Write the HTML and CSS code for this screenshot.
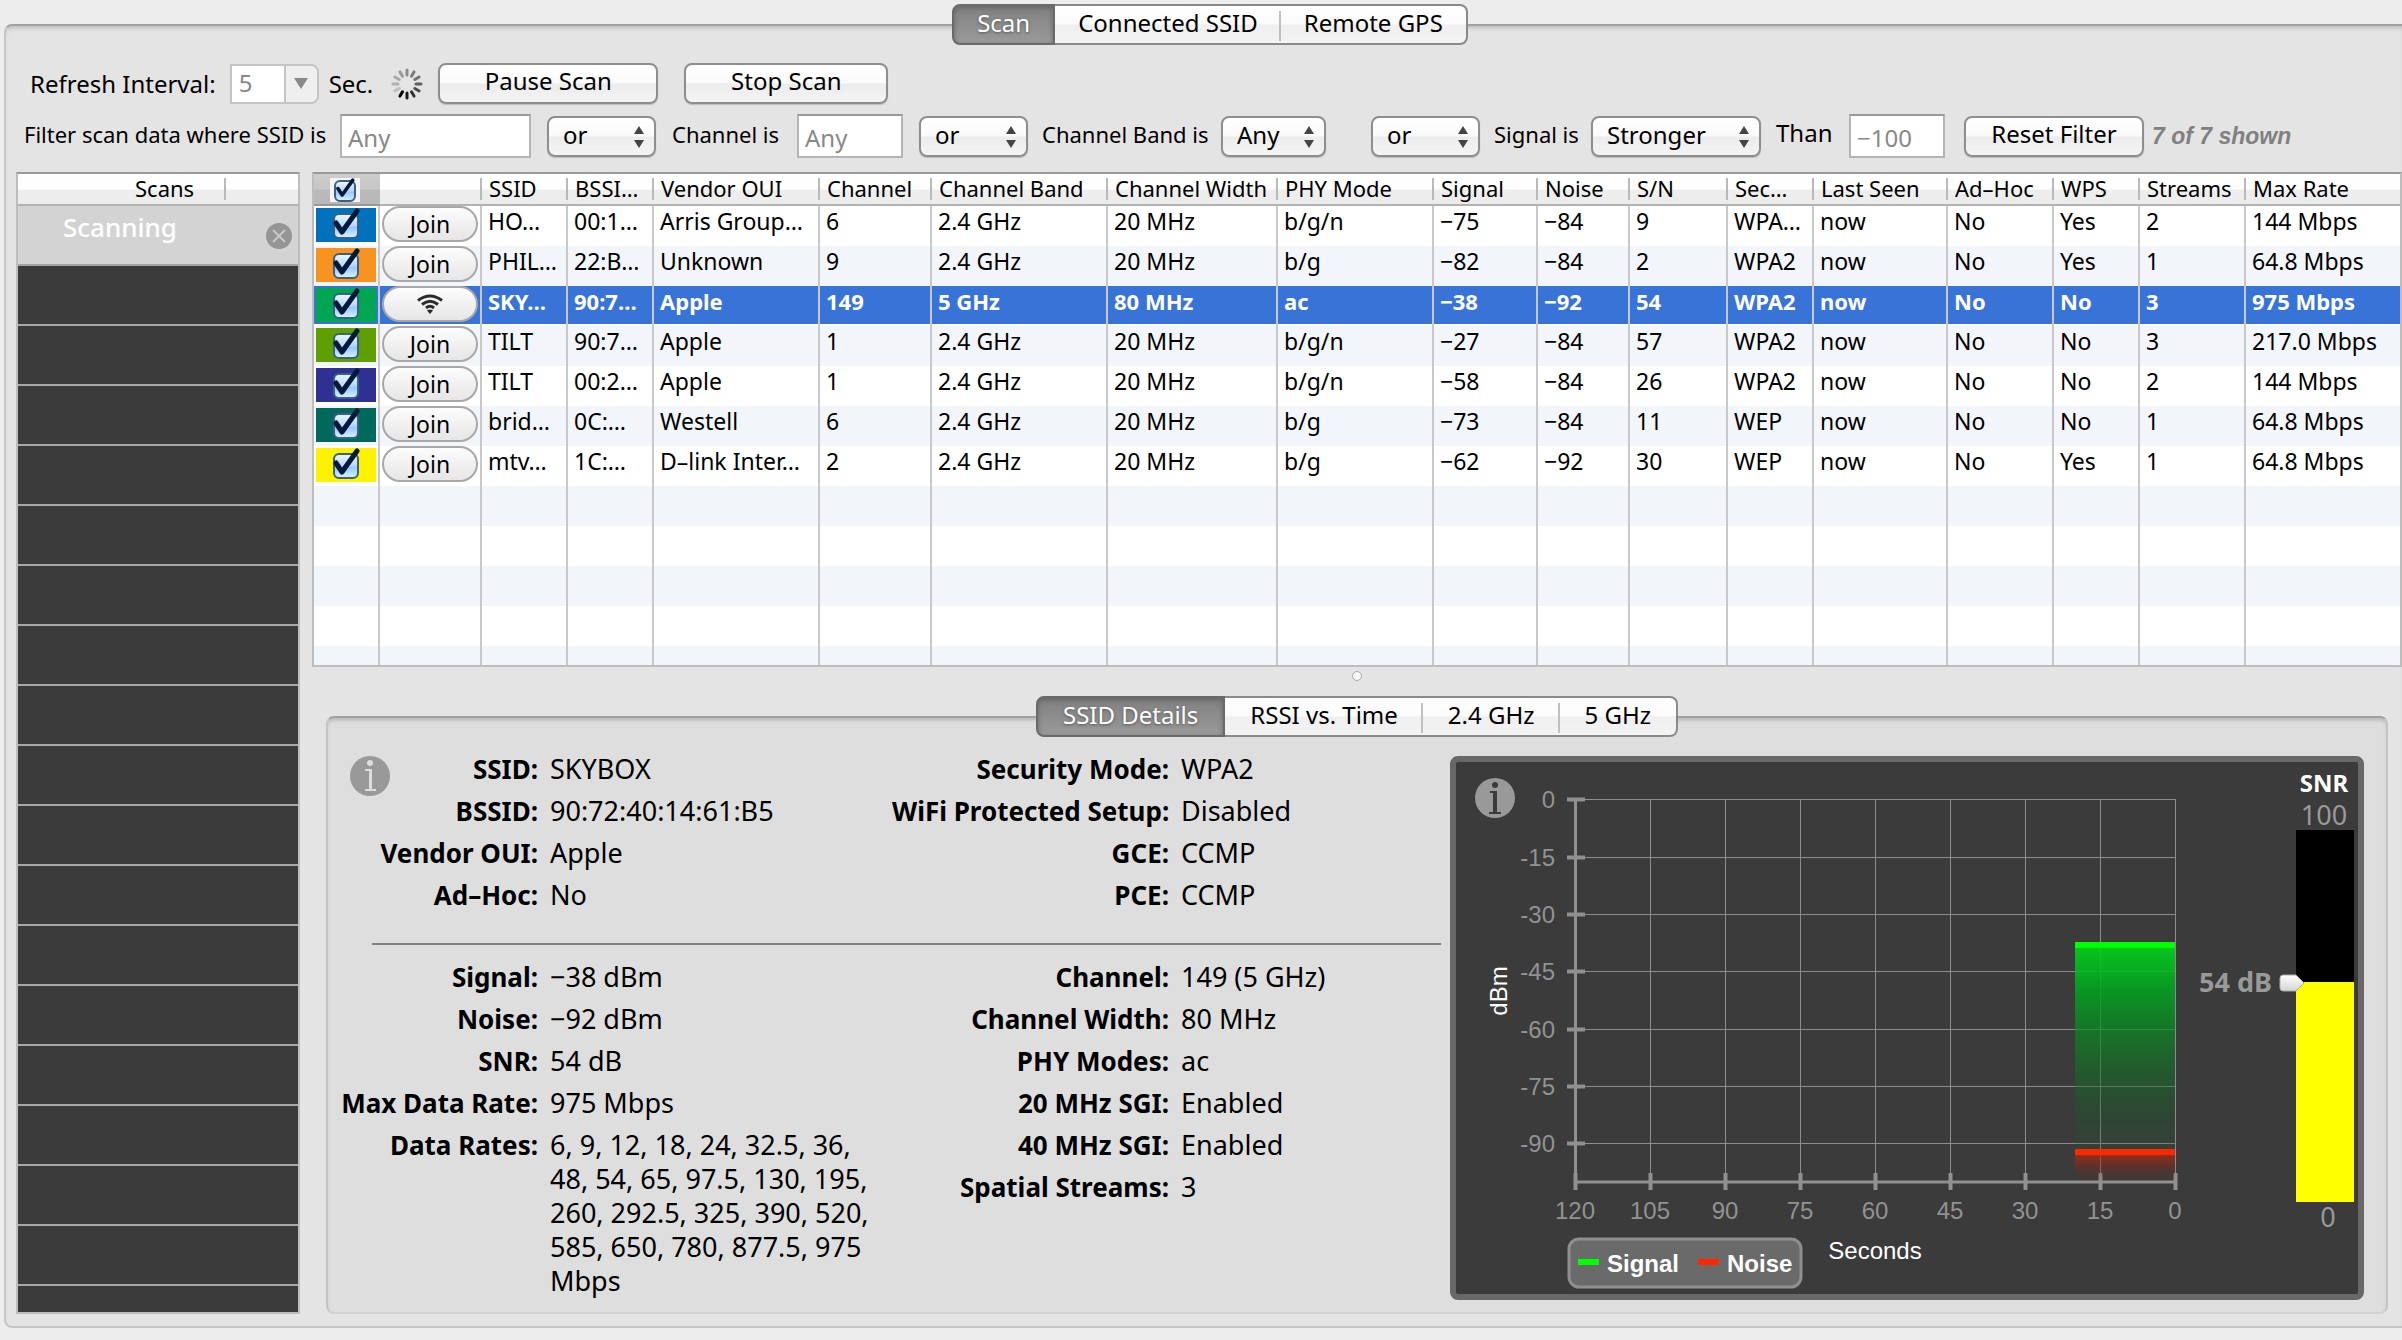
FILE: index.html
```
<!DOCTYPE html>
<html lang="en">
<head>
<meta charset="utf-8">
<title>WiFi Scanner</title>
<link rel="stylesheet" href="styles.css">
</head>
<body>
<svg class="defs" aria-hidden="true">
  <symbol id="tick" viewBox="0 0 32 34">
    <path d="M6 15l6 9L27 3" fill="none" stroke="#03193a" stroke-width="5" stroke-linecap="round" stroke-linejoin="round"/>
  </symbol>
  <symbol id="arrows" viewBox="0 0 10 22">
    <path d="M5 0l5 8H0zM5 22l5-8H0z" fill="#444"/>
  </symbol>
</svg>

<nav class="tabs main-tabs">
  <button type="button" class="tab active">Scan</button>
  <button type="button" class="tab">Connected SSID</button>
  <button type="button" class="tab">Remote GPS</button>
</nav>

<main class="panel">
  <div class="toolbar">
    <label for="interval">Refresh Interval:</label>
    <div class="combo">
      <input id="interval" type="text" value="5" disabled>
      <button type="button" class="combo-btn" aria-label="Choose interval" disabled><svg width="14" height="11" viewBox="0 0 14 11"><path d="M0 0h14L7 11z" fill="#8a8a8a"/></svg></button>
    </div>
    <span class="unit">Sec.</span>
    <svg class="spinner" width="32" height="32" viewBox="-16 -16 32 32" stroke-width="3" stroke-linecap="round">
      <g stroke="#000">
        <path d="M0-9V-14" opacity=".38"/><path d="M0-9V-14" opacity=".45" transform="rotate(30)"/>
        <path d="M0-9V-14" opacity=".5" transform="rotate(60)"/><path d="M0-9V-14" opacity=".58" transform="rotate(90)"/>
        <path d="M0-9V-14" opacity=".66" transform="rotate(120)"/><path d="M0-9V-14" opacity=".78" transform="rotate(150)"/>
        <path d="M0-9V-14" opacity=".88" transform="rotate(180)"/><path d="M0-9V-14" transform="rotate(210)"/>
        <path d="M0-9V-14" opacity=".16" transform="rotate(240)"/><path d="M0-9V-14" opacity=".22" transform="rotate(270)"/>
        <path d="M0-9V-14" opacity=".26" transform="rotate(300)"/><path d="M0-9V-14" opacity=".32" transform="rotate(330)"/>
      </g>
    </svg>
    <button type="button" class="btn pause">Pause Scan</button>
    <button type="button" class="btn stop">Stop Scan</button>
  </div>

  <form class="filter">
    <label for="f-ssid">Filter scan data where SSID is</label>
    <input id="f-ssid" class="field w-ssid" type="text" placeholder="Any">
    <div class="pick w-or"><select aria-label="Combine with channel"><option>or</option><option>and</option></select><svg><use href="#arrows"/></svg></div>
    <label for="f-chan">Channel is</label>
    <input id="f-chan" class="field w-chan" type="text" placeholder="Any">
    <div class="pick w-or"><select aria-label="Combine with band"><option>or</option><option>and</option></select><svg><use href="#arrows"/></svg></div>
    <label for="f-band">Channel Band is</label>
    <div class="pick w-band"><select id="f-band"><option>Any</option></select><svg><use href="#arrows"/></svg></div>
    <div class="pick w-or"><select aria-label="Combine with signal"><option>or</option><option>and</option></select><svg><use href="#arrows"/></svg></div>
    <label for="f-signal">Signal is</label>
    <div class="pick w-signal"><select id="f-signal"><option>Stronger</option><option>Weaker</option></select><svg><use href="#arrows"/></svg></div>
    <label class="than" for="f-than">Than</label>
    <input id="f-than" class="field w-than" type="text" placeholder="−100">
    <button type="reset" class="btn w-reset">Reset Filter</button>
    <output class="shown">7 of 7 shown</output>
  </form>

  <div class="workspace">
    <aside class="scans">
      <div class="scans-head"><span>Scans</span></div>
      <div class="scan-row">
        <span>Scanning</span>
        <button type="button" class="close" aria-label="Cancel scan"><svg width="28" height="28" viewBox="0 0 28 28"><circle cx="14" cy="14" r="13" fill="#959595"/><path d="M8 8l12 12M20 8L8 20" stroke="#c8c8c8" stroke-width="2"/></svg></button>
      </div>
      <div class="scan-empty"></div>
    </aside>

    <div class="content">
      <table class="networks">
        <colgroup>
          <col style="width:66px"><col style="width:102px"><col style="width:86px"><col style="width:86px"><col style="width:166px"><col style="width:112px"><col style="width:176px"><col style="width:170px"><col style="width:156px"><col style="width:104px"><col style="width:92px"><col style="width:98px"><col style="width:86px"><col style="width:134px"><col style="width:106px"><col style="width:86px"><col style="width:106px"><col style="width:154px">
        </colgroup>
        <thead>
          <tr><th class="mark"><label class="check small"><input type="checkbox" checked aria-label="Show all"><svg><use href="#tick"/></svg></label></th><th></th><th>SSID</th><th>BSSI…</th><th>Vendor OUI</th><th>Channel</th><th>Channel Band</th><th>Channel Width</th><th>PHY Mode</th><th>Signal</th><th>Noise</th><th>S/N</th><th>Sec…</th><th>Last Seen</th><th>Ad–Hoc</th><th>WPS</th><th>Streams</th><th>Max Rate</th></tr>
        </thead>
        <tbody>
          <tr><td class="mark"><label class="check blue"><input type="checkbox" checked aria-label="Show HO…"><svg><use href="#tick"/></svg></label></td><td class="act"><button type="button" class="join">Join</button></td><td>HO…</td><td>00:1…</td><td>Arris Group…</td><td>6</td><td>2.4 GHz</td><td>20 MHz</td><td>b/g/n</td><td>−75</td><td>−84</td><td>9</td><td>WPA…</td><td>now</td><td>No</td><td>Yes</td><td>2</td><td>144 Mbps</td></tr>
          <tr><td class="mark"><label class="check orange"><input type="checkbox" checked aria-label="Show PHIL…"><svg><use href="#tick"/></svg></label></td><td class="act"><button type="button" class="join">Join</button></td><td>PHIL…</td><td>22:B…</td><td>Unknown</td><td>9</td><td>2.4 GHz</td><td>20 MHz</td><td>b/g</td><td>−82</td><td>−84</td><td>2</td><td>WPA2</td><td>now</td><td>No</td><td>Yes</td><td>1</td><td>64.8 Mbps</td></tr>
          <tr class="selected"><td class="mark"><label class="check green"><input type="checkbox" checked aria-label="Show SKY…"><svg><use href="#tick"/></svg></label></td><td class="act"><button type="button" class="join" aria-label="Connected"><svg class="wifi" width="26" height="20" viewBox="0 0 26 20" fill="none" stroke="#2b2b2b" stroke-width="3"><path d="M1 6.500Q13-2.500 25 6.500M5 10.500Q13 4 21 10.500M9 14Q13 10.500 17 14"/><path d="M13 20l-3-3.500q3-2 6 0z" fill="#2b2b2b" stroke="none"/></svg></button></td><td>SKY…</td><td>90:7…</td><td>Apple</td><td>149</td><td>5 GHz</td><td>80 MHz</td><td>ac</td><td>−38</td><td>−92</td><td>54</td><td>WPA2</td><td>now</td><td>No</td><td>No</td><td>3</td><td>975 Mbps</td></tr>
          <tr><td class="mark"><label class="check lime"><input type="checkbox" checked aria-label="Show TILT 90:7…"><svg><use href="#tick"/></svg></label></td><td class="act"><button type="button" class="join">Join</button></td><td>TILT</td><td>90:7…</td><td>Apple</td><td>1</td><td>2.4 GHz</td><td>20 MHz</td><td>b/g/n</td><td>−27</td><td>−84</td><td>57</td><td>WPA2</td><td>now</td><td>No</td><td>No</td><td>3</td><td>217.0 Mbps</td></tr>
          <tr><td class="mark"><label class="check indigo"><input type="checkbox" checked aria-label="Show TILT 00:2…"><svg><use href="#tick"/></svg></label></td><td class="act"><button type="button" class="join">Join</button></td><td>TILT</td><td>00:2…</td><td>Apple</td><td>1</td><td>2.4 GHz</td><td>20 MHz</td><td>b/g/n</td><td>−58</td><td>−84</td><td>26</td><td>WPA2</td><td>now</td><td>No</td><td>No</td><td>2</td><td>144 Mbps</td></tr>
          <tr><td class="mark"><label class="check teal"><input type="checkbox" checked aria-label="Show brid…"><svg><use href="#tick"/></svg></label></td><td class="act"><button type="button" class="join">Join</button></td><td>brid…</td><td>0C:…</td><td>Westell</td><td>6</td><td>2.4 GHz</td><td>20 MHz</td><td>b/g</td><td>−73</td><td>−84</td><td>11</td><td>WEP</td><td>now</td><td>No</td><td>No</td><td>1</td><td>64.8 Mbps</td></tr>
          <tr><td class="mark"><label class="check yellow"><input type="checkbox" checked aria-label="Show mtv…"><svg><use href="#tick"/></svg></label></td><td class="act"><button type="button" class="join">Join</button></td><td>mtv…</td><td>1C:…</td><td>D–link Inter…</td><td>2</td><td>2.4 GHz</td><td>20 MHz</td><td>b/g</td><td>−62</td><td>−92</td><td>30</td><td>WEP</td><td>now</td><td>No</td><td>Yes</td><td>1</td><td>64.8 Mbps</td></tr>
          <tr><td></td><td></td><td></td><td></td><td></td><td></td><td></td><td></td><td></td><td></td><td></td><td></td><td></td><td></td><td></td><td></td><td></td><td></td></tr>
          <tr><td></td><td></td><td></td><td></td><td></td><td></td><td></td><td></td><td></td><td></td><td></td><td></td><td></td><td></td><td></td><td></td><td></td><td></td></tr>
          <tr><td></td><td></td><td></td><td></td><td></td><td></td><td></td><td></td><td></td><td></td><td></td><td></td><td></td><td></td><td></td><td></td><td></td><td></td></tr>
          <tr><td></td><td></td><td></td><td></td><td></td><td></td><td></td><td></td><td></td><td></td><td></td><td></td><td></td><td></td><td></td><td></td><td></td><td></td></tr>
          <tr class="last"><td></td><td></td><td></td><td></td><td></td><td></td><td></td><td></td><td></td><td></td><td></td><td></td><td></td><td></td><td></td><td></td><td></td><td></td></tr>
        </tbody>
      </table>

      <div class="splitter"><span></span></div>

      <nav class="tabs detail-tabs">
        <button type="button" class="tab active">SSID Details</button>
        <button type="button" class="tab">RSSI vs. Time</button>
        <button type="button" class="tab">2.4 GHz</button>
        <button type="button" class="tab">5 GHz</button>
      </nav>

      <section class="details">
        <div class="facts">
          <svg class="info" width="40" height="40" viewBox="0 0 40 40"><circle cx="20" cy="20" r="20" fill="#999"/><g fill="#dcdcdc"><circle cx="20" cy="7" r="3"/><path d="M15 13h7v20h4v2H15v-2h4V15h-4z"/></g></svg>
          <div class="pair">
            <dl><dt>SSID:</dt><dd>SKYBOX</dd><dt>BSSID:</dt><dd>90:72:40:14:61:B5</dd><dt>Vendor OUI:</dt><dd>Apple</dd><dt>Ad–Hoc:</dt><dd>No</dd></dl>
            <dl class="second"><dt>Security Mode:</dt><dd>WPA2</dd><dt>WiFi Protected Setup:</dt><dd>Disabled</dd><dt>GCE:</dt><dd>CCMP</dd><dt>PCE:</dt><dd>CCMP</dd></dl>
          </div>
          <hr>
          <div class="pair">
            <dl><dt>Signal:</dt><dd>−38 dBm</dd><dt>Noise:</dt><dd>−92 dBm</dd><dt>SNR:</dt><dd>54 dB</dd><dt>Max Data Rate:</dt><dd>975 Mbps</dd><dt>Data Rates:</dt><dd>6, 9, 12, 18, 24, 32.5, 36, 48, 54, 65, 97.5, 130, 195, 260, 292.5, 325, 390, 520, 585, 650, 780, 877.5, 975 Mbps</dd></dl>
            <dl class="second"><dt>Channel:</dt><dd>149 (5 GHz)</dd><dt>Channel Width:</dt><dd>80 MHz</dd><dt>PHY Modes:</dt><dd>ac</dd><dt>20 MHz SGI:</dt><dd>Enabled</dd><dt>40 MHz SGI:</dt><dd>Enabled</dd><dt>Spatial Streams:</dt><dd>3</dd></dl>
          </div>
        </div>

        <div class="chart">
          <svg viewBox="1456 762 902 532" role="img" aria-label="Signal and noise over time">
            <defs>
              <linearGradient id="sig" x1="0" y1="0" x2="0" y2="1"><stop offset="0" stop-color="#00d81a"/><stop offset=".2" stop-color="#00a41e" stop-opacity=".95"/><stop offset=".5" stop-color="#0f7a24" stop-opacity=".65"/><stop offset=".75" stop-color="#185c28" stop-opacity=".35"/><stop offset="1" stop-color="#185c28" stop-opacity="0"/></linearGradient>
              <linearGradient id="noi" x1="0" y1="0" x2="0" y2="1"><stop offset="0" stop-color="#c8280f" stop-opacity=".9"/><stop offset="1" stop-color="#6a2018" stop-opacity="0"/></linearGradient>
              <linearGradient id="knob" x1="0" y1="0" x2="0" y2="1"><stop offset="0" stop-color="#fff"/><stop offset="1" stop-color="#d4d4d4"/></linearGradient>
            </defs>
            <circle cx="1495" cy="798" r="20" fill="#999"/>
            <g fill="#3b3b3b"><circle cx="1495" cy="785" r="3"/><path d="M1490 791h7v21h4v2h-12v-2h4v-19h-3z"/></g>
            <path class="grid" d="M1575 799.500H2175M1575 857.500H2175M1575 914.500H2175M1575 971.500H2175M1575 1029.500H2175M1575 1086.500H2175M1575 1143.500H2175M1650.500 799V1182M1725.500 799V1182M1800.500 799V1182M1875.500 799V1182M1950.500 799V1182M2025.500 799V1182M2100.500 799V1182M2175.500 799V1182"/>
            <path class="axis" d="M1575.500 799V1190M1575 1182H2177"/>
            <path class="ticks" d="M1567 799.500h18M1567 857.500h18M1567 914.500h18M1567 971.500h18M1567 1029.500h18M1567 1086.500h18M1567 1143.500h18M1575.500 1173v17M1650.500 1173v17M1725.500 1173v17M1800.500 1173v17M1875.500 1173v17M1950.500 1173v17M2025.500 1173v17M2100.500 1173v17M2175.500 1173v17"/>
            <g opacity=".9">
              <rect x="2075" y="945" width="100" height="234" fill="url(#sig)"/>
              <rect x="2075" y="1151" width="100" height="30" fill="url(#noi)"/>
            </g>
            <rect x="2075" y="942" width="100" height="6" fill="#0f0"/>
            <rect x="2075" y="1149" width="100" height="6" fill="#ff2600"/>
            <g class="num end"><text x="1555" y="808">0</text><text x="1555" y="866">-15</text><text x="1555" y="923">-30</text><text x="1555" y="980">-45</text><text x="1555" y="1038">-60</text><text x="1555" y="1095">-75</text><text x="1555" y="1152">-90</text></g>
            <g class="num mid"><text x="1575" y="1219">120</text><text x="1650" y="1219">105</text><text x="1725" y="1219">90</text><text x="1800" y="1219">75</text><text x="1875" y="1219">60</text><text x="1950" y="1219">45</text><text x="2025" y="1219">30</text><text x="2100" y="1219">15</text><text x="2175" y="1219">0</text></g>
            <text class="unit-label" transform="translate(1507 991) rotate(-90)">dBm</text>
            <text class="unit-label" x="1875" y="1259">Seconds</text>
            <rect x="1569" y="1239" width="232" height="48" rx="10" fill="#6a6a6a" stroke="#8f8f8f" stroke-width="3"/>
            <path d="M1578 1262h21" stroke="#0f0" stroke-width="6"/>
            <path d="M1698 1262h21" stroke="#ff2600" stroke-width="6"/>
            <text class="key" x="1607" y="1272">Signal</text>
            <text class="key" x="1727" y="1272">Noise</text>
            <rect x="2296" y="830" width="58" height="152" fill="#000"/>
            <rect x="2296" y="982" width="58" height="220" fill="#ffff00"/>
            <text class="snr" x="2324" y="792">SNR</text>
            <text class="scale" x="2324" y="825">100</text>
            <text class="scale" x="2328" y="1227">0</text>
            <text class="reading" x="2272" y="992">54 dB</text>
            <path d="M2283 975h13l8 8-8 8h-13q-3 0-3-3v-10q0-3 3-3z" fill="url(#knob)" stroke="#aaa"/>
          </svg>
        </div>
      </section>
    </div>
  </div>
</main>
</body>
</html>
```
FILE: styles.css
```
* { box-sizing: border-box; }

body {
  margin: 0;
  min-height: 100vh;
  overflow-x: hidden;
  background: #ededed;
  color: #000;
  font: 24px/34px "Noto Sans", "Open Sans", sans-serif;
}

button, input, select { font: inherit; color: inherit; margin: 0; }
.defs { position: absolute; width: 0; height: 0; }

/* segmented tabs sitting on a panel's top edge */
.tabs {
  position: relative;
  z-index: 1;
  display: flex;
  justify-content: center;
}
.main-tabs { padding: 4px 0 0 18px; }
.tab {
  height: 41px;
  padding: 0 23px 3px;
  border: 2px solid #8a8a8a;
  border-width: 2px 0;
  background:
    linear-gradient(#c0c0c0, #c0c0c0) right 5px / 2px 30px no-repeat,
    linear-gradient(#fff 0%, #fbfbfb 48%, #efefef 52%, #f3f3f3 100%);
  line-height: 34px;
}
.detail-tabs .tab { padding: 0 25px 3px; }
.tab:last-child {
  border-right-width: 2px;
  border-radius: 0 8px 8px 0;
  background: linear-gradient(#fff 0%, #fbfbfb 48%, #efefef 52%, #f3f3f3 100%);
}
.tab.active {
  border: 2px solid #6a6a6a;
  border-radius: 8px 0 0 8px;
  background: linear-gradient(#808080, #9a9a9a);
  box-shadow: inset 0 2px 5px #666;
  color: #fff;
  text-shadow: 0 1px 3px #555;
}

.panel {
  margin: -21px 0 11px 4px;
  padding: 37px 0 12px 10px;
  border: 2px solid #c6c6c6;
  border-top-color: #a2a2a2;
  border-right: 0;
  border-radius: 8px 0 0 8px;
  background: #e4e4e4;
  box-shadow: inset 0 4px 4px -2px #bbb;
}

/* push buttons and pop-ups */
.btn, .pick select {
  height: 41px;
  border: 2px solid #8e8e8e;
  border-radius: 8px;
  background: linear-gradient(#fff 0%, #fafafa 48%, #ececec 52%, #f4f4f4 100%);
  box-shadow: 0 1px 1px #bbb;
}
.btn { padding: 0 0 5px; line-height: 32px; }

.toolbar { display: flex; align-items: center; padding-left: 14px; }
.combo {
  display: flex;
  width: 89px;
  height: 40px;
  margin: 0 10px 0 14px;
  border: 2px solid #c4c4c4;
  border-radius: 0 8px 8px 0;
}
.combo input {
  width: 54px;
  padding: 0 7px 2px;
  border: 0;
  border-right: 2px solid #c4c4c4;
  background: #fff;
  color: #888;
}
.combo-btn {
  flex: 1;
  padding: 0;
  border: 0;
  border-radius: 0 6px 6px 0;
  background: #efefef;
  line-height: 0;
}
.spinner { margin: 0 15px 0 18px; }
.pause { width: 220px; margin-right: 26px; }
.stop { width: 204px; }

.filter {
  display: grid;
  grid-template-columns: 316px 207px 125px 125px 122px 123px 179px 150px 123px 97px 185px 73px 115px 188px 1fr;
  align-items: center;
  margin-top: 10px;
  padding-left: 8px;
}
.filter label { padding-bottom: 4px; font-size: 22px; }
.filter .than { padding-bottom: 6px; font-size: 24px; }
.field {
  height: 44px;
  padding: 2px 6px 0;
  border: 2px solid #b4b4b4;
  border-top-color: #999;
  background: #fff;
}
.field::placeholder { color: #888; opacity: 1; }
.pick { position: relative; }
.pick select {
  width: 100%;
  padding: 0 0 2px 14px;
  appearance: none;
}
.pick svg {
  position: absolute;
  right: 12px;
  top: 10px;
  width: 10px;
  height: 22px;
  pointer-events: none;
}
.w-ssid { width: 191px; }
.w-or { width: 109px; }
.w-chan { width: 106px; }
.w-band { width: 105px; }
.w-signal { width: 170px; }
.w-than { width: 96px; }
.w-reset { width: 180px; }
.shown {
  color: #808080;
  font: italic bold 23px/34px "Liberation Sans", Arial, sans-serif;
}

.workspace { display: flex; gap: 12px; margin-top: 14px; }

/* list of scans */
.scans {
  flex: 0 0 284px;
  display: flex;
  flex-direction: column;
  border: 2px solid #bdbdbd;
  border-top-color: #999;
}
.scans-head {
  display: flex;
  height: 32px;
  border-bottom: 2px solid #b2b2b2;
  background:
    linear-gradient(#b9b9b9, #b9b9b9) 206px 4px / 2px 22px no-repeat,
    linear-gradient(#fff 0%, #fdfdfd 50%, #eee 54%, #ececec 100%);
  font-size: 22px;
  line-height: 28px;
}
.scans-head span { width: 208px; padding-left: 117px; }
.scan-row {
  display: flex;
  justify-content: space-between;
  height: 60px;
  padding: 4px 5px 0 45px;
  border-bottom: 2px solid #a2a2a2;
  background: #d3d3d3;
  color: #fff;
  font-size: 26px;
  font-weight: 500;
}
.close {
  align-self: flex-end;
  margin-bottom: 14px;
  padding: 0;
  border: 0;
  background: none;
  line-height: 0;
}
.scan-empty {
  flex: 1;
  background: repeating-linear-gradient(#3b3b3b 0 58px, #a8a8a8 58px 60px);
}

.content { flex: 1; min-width: 0; }

/* table of networks */
.networks {
  width: 100%;
  table-layout: fixed;
  border: 2px solid #bdbdbd;
  border-top-color: #999;
  border-collapse: separate;
  border-spacing: 0;
}
th, td { overflow: hidden; white-space: nowrap; text-align: left; vertical-align: top; }
th {
  height: 32px;
  padding: 0 0 0 7px;
  border-bottom: 2px solid #b2b2b2;
  background:
    linear-gradient(#b9b9b9, #b9b9b9) right 4px / 2px 22px no-repeat,
    linear-gradient(#fff 0%, #fdfdfd 50%, #eee 54%, #ececec 100%);
  font-size: 22px;
  font-weight: 400;
  line-height: 28px;
}
th.mark {
  padding: 0;
  border-bottom-color: #999;
  background: linear-gradient(#ccc 0%, #c6c6c6 50%, #bababa 54%, #b8b8b8 100%);
}
td {
  height: 40px;
  padding: 0 0 0 6px;
  border-right: 2px solid #c8c8c8;
  background: #fff;
  font-size: 23px;
  line-height: 30px;
}
th:last-child { background: linear-gradient(#fff 0%, #fdfdfd 50%, #eee 54%, #ececec 100%); }
td:last-child { border-right: 0; }
tbody tr:nth-child(even) td { background: #f2f6fb; }
tr.selected td {
  background: linear-gradient(#3874d8 38px, #fff 38px);
  color: #fff;
  font-size: 22px;
  font-weight: 700;
}
tr.last td { height: 19px; }
td.mark { padding: 2px 2px 0; }
td.act { padding: 0 2px; line-height: 0; }

.check { display: grid; height: 34px; justify-content: center; }
.check input, .check svg { grid-area: 1 / 1; }
.check input {
  width: 26px;
  height: 26px;
  margin: 5px 3px 3px;
  appearance: none;
  border: 2px solid #3b5f87;
  border-radius: 6px;
  background: linear-gradient(#eaf4ff, #b5d8fb 50%, #94c6f8 55%, #d3f0ff);
}
.check svg { width: 32px; height: 34px; pointer-events: none; }
.check.small { width: 30px; height: 24px; margin: 4px auto 0 16px; background: #f4f4f4; }
.check.small input { width: 22px; height: 22px; margin: 2px 4px 0; }
.check.small svg { width: 30px; height: 24px; }
.blue { background: #0071bc; }
.orange { background: #f7931e; }
.green { background: #00a651; }
.lime { background: #5fa000; }
.indigo { background: #2e3192; }
.teal { background: #00695c; }
.yellow { background: #fff200; }

.join {
  width: 100%;
  height: 36px;
  padding: 0;
  border: 2px solid #a8a8a8;
  border-radius: 18px;
  background: linear-gradient(#fcfcfc, #e6e6e6);
  font-size: 23px;
  line-height: 32px;
}
.wifi { display: block; margin: 0 auto; }

.splitter { display: flex; justify-content: center; height: 29px; padding-top: 4px; }
.splitter span {
  width: 10px;
  height: 10px;
  border: 1px solid #aaa;
  border-radius: 50%;
  background: #f6f6f6;
}

/* details of the chosen network */
.details {
  display: grid;
  grid-template-columns: minmax(0, 1fr) 914px;
  gap: 9px;
  margin: -21px 14px 0;
  padding-right: 22px;
  border: 2px solid #c4c4c4;
  border-top-color: #a0a0a0;
  border-bottom-color: #d2d2d2;
  border-radius: 8px;
  background: #dedede;
  box-shadow: inset 0 4px 4px -2px #b4b4b4;
}
.facts { position: relative; padding: 34px 0 14px; font-size: 26px; }
.info { position: absolute; left: 22px; top: 38px; }
.pair { display: flex; gap: 12px; }
dl {
  display: grid;
  grid-template-columns: 210px 330px;
  align-content: start;
  gap: 8px 12px;
  margin: 0;
}
.second { grid-template-columns: 277px 1fr; }
dt { font-weight: 700; text-align: right; white-space: nowrap; }
dd { margin: 0; font-size: 27px; }
.facts hr {
  height: 2px;
  margin: 31px 0 15px 44px;
  border: 0;
  background: #808080;
}

.chart {
  align-self: start;
  margin-top: 38px;
  border: 6px solid #686868;
  border-radius: 8px;
  background: #3b3b3b;
}
.chart svg { display: block; width: 100%; }
.grid { fill: none; stroke: #8c8c8c; stroke-width: 1; }
.axis { fill: none; stroke: #909090; stroke-width: 3; }
.ticks { fill: none; stroke: #909090; stroke-width: 4; }
.chart text { font: 24px "Liberation Sans", Arial, sans-serif; }
.chart .num { fill: #929292; }
.end { text-anchor: end; }
.mid, .unit-label, .snr, .scale { text-anchor: middle; }
.chart .unit-label, .chart .key, .chart .snr { fill: #fff; }
.chart .key { font-weight: 700; }
.chart .snr { font: 700 24px "Noto Sans", sans-serif; }
.chart .scale { fill: #999; font: 27px "Noto Sans", sans-serif; }
.chart .reading { fill: #999; font: 700 27px "Noto Sans", sans-serif; text-anchor: end; }
```
